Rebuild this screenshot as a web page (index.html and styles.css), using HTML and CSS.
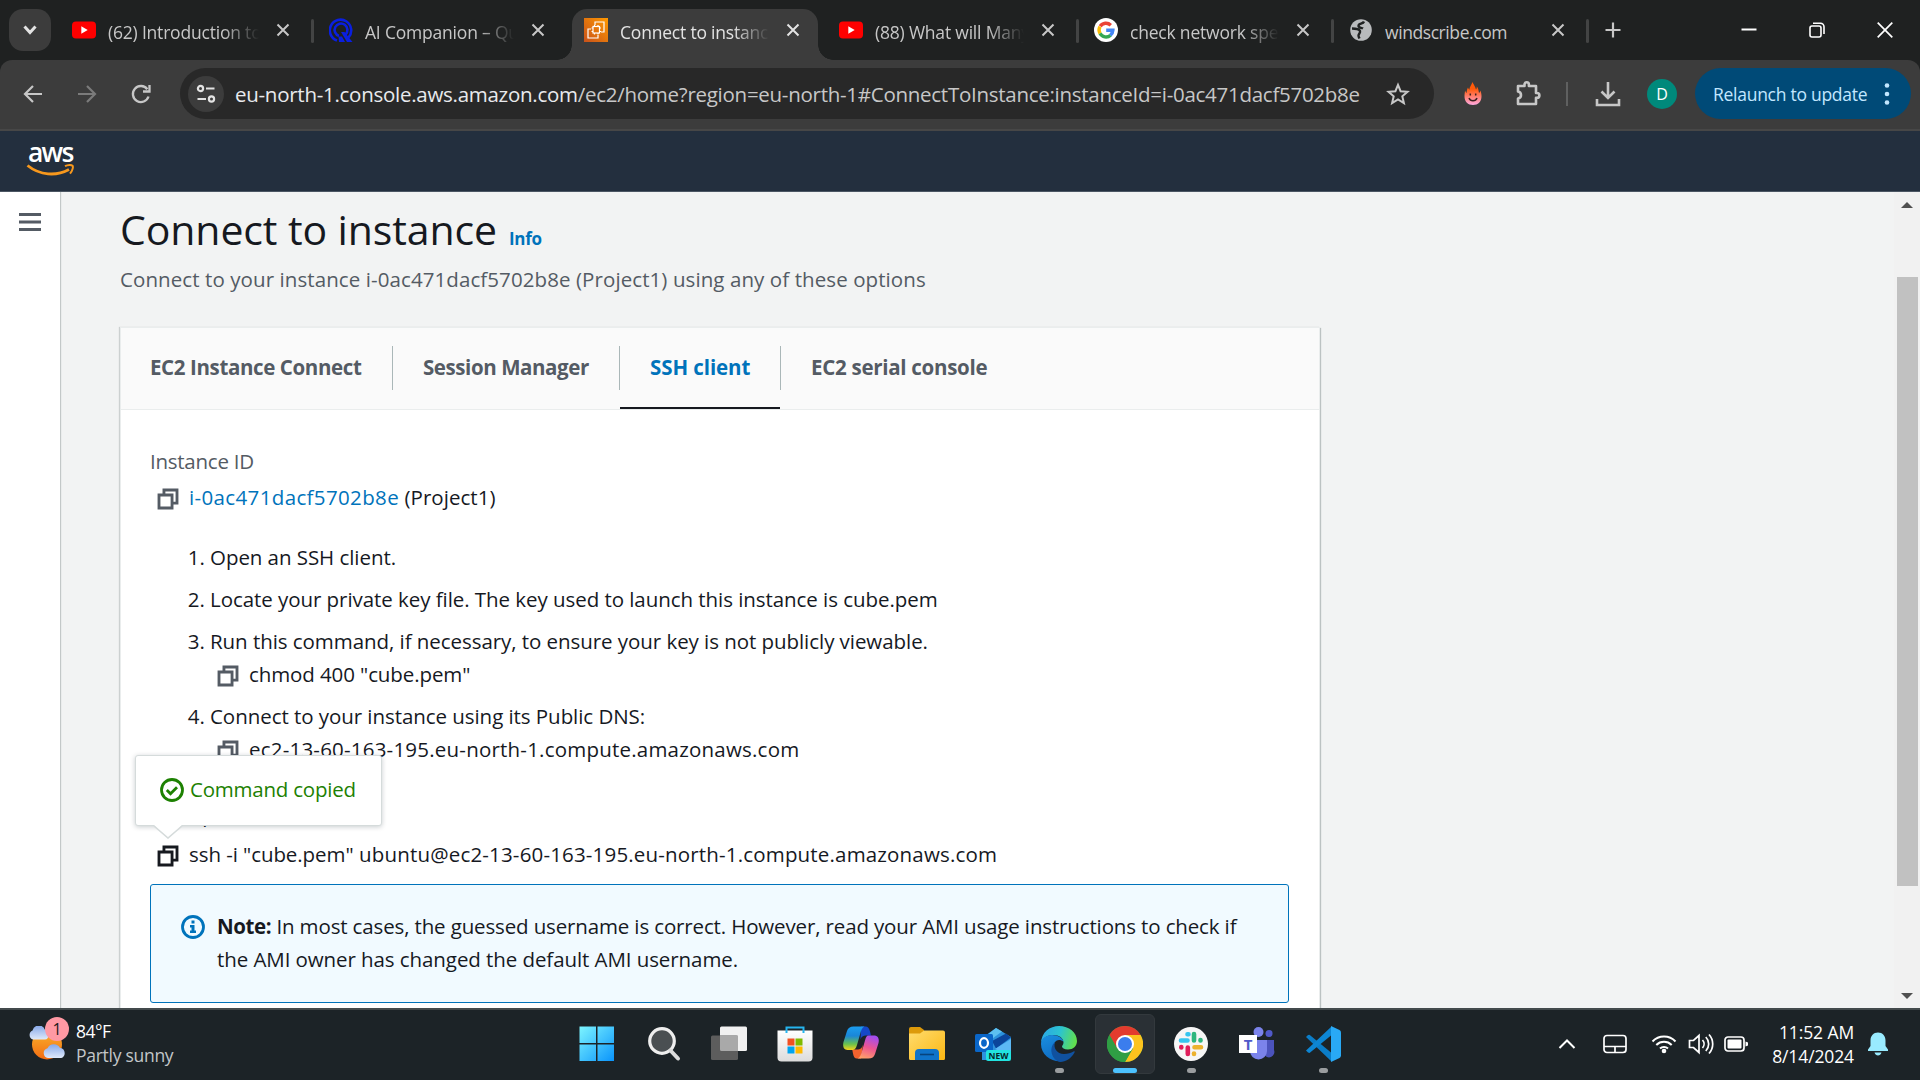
FILE: index.html
```html
<!DOCTYPE html>
<html lang="en">
<head>
<meta charset="utf-8">
<title>Connect to instance</title>
<link rel="stylesheet" href="styles.css">
</head>
<body>
<svg class="defs" width="0" height="0" aria-hidden="true">
  <defs>
    <symbol id="close" viewBox="0 0 14 14"><path d="M1.5 1.5l11 11M12.5 1.5l-11 11" stroke="currentColor" stroke-width="2" fill="none"/></symbol>
    <symbol id="youtube" viewBox="0 0 24 24"><rect x="0" y="3.5" width="24" height="17" rx="4" fill="#f00"/><path d="M9.3 8.2v7.6l6.4-3.8z" fill="#fff"/></symbol>
    <symbol id="copy" viewBox="0 0 16 16"><path d="M2 5.3h8.7V14H2zM5.3 5V2H14v8.7h-3" fill="none" stroke="currentColor" stroke-width="1.9"/></symbol>
    <linearGradient id="gWin" x1="0" y1="0" x2="1" y2="1"><stop offset="0" stop-color="#7df5ff"/><stop offset="1" stop-color="#0a94fb"/></linearGradient>
    <linearGradient id="gAws" x1="0" y1="1" x2="1" y2="0"><stop offset="0" stop-color="#c8511b"/><stop offset="1" stop-color="#f90"/></linearGradient>
    <linearGradient id="gFlame" x1="0" y1="0" x2="0" y2="1"><stop offset="0.3" stop-color="#ff5a0a"/><stop offset="1" stop-color="#ffa8e0"/></linearGradient>
    <linearGradient id="gFolder" x1="0" y1="0" x2="1" y2="1"><stop offset="0" stop-color="#ffdc6e"/><stop offset="1" stop-color="#fbb713"/></linearGradient>
    <linearGradient id="gBag" x1="0" y1="0" x2="0" y2="1"><stop offset="0" stop-color="#fff"/><stop offset="1" stop-color="#dcdcdc"/></linearGradient>
    <linearGradient id="gCop1" x1="0" y1="0" x2="0" y2="1"><stop offset="0" stop-color="#1b9df0"/><stop offset="0.4" stop-color="#1a86d8"/><stop offset="0.75" stop-color="#6bc14b"/><stop offset="1" stop-color="#f7d21c"/></linearGradient>
    <linearGradient id="gCop2" x1="0.6" y1="0" x2="0.3" y2="1"><stop offset="0" stop-color="#a34df0"/><stop offset="0.5" stop-color="#ee5591"/><stop offset="1" stop-color="#fda06a"/></linearGradient>
    <linearGradient id="gEdge1" x1="0" y1="0.3" x2="1" y2="0.5"><stop offset="0" stop-color="#2aa6e6"/><stop offset="0.5" stop-color="#2cc3d0"/><stop offset="1" stop-color="#62e04c"/></linearGradient>
    <linearGradient id="gEdge2" x1="0" y1="0" x2="0.4" y2="1"><stop offset="0" stop-color="#1a8fe0"/><stop offset="1" stop-color="#0f6cc4"/></linearGradient>
    <linearGradient id="gSun" x1="0" y1="0" x2="0" y2="1"><stop offset="0" stop-color="#f9b52c"/><stop offset="1" stop-color="#f36b12"/></linearGradient>
    <linearGradient id="gCloud" x1="0" y1="0" x2="0" y2="1"><stop offset="0" stop-color="#86a8e8"/><stop offset="1" stop-color="#dfe9fb"/></linearGradient>
  </defs>
</svg>

<header class="tabstrip">
  <button class="tab-search"><svg width="16" height="12" viewBox="0 0 16 12"><path d="M2.5 2.5L8 8.5l5.5-6" fill="none" stroke="#e3e3e3" stroke-width="3"/></svg></button>
  <div class="tab tab-first sep"><svg class="fav"><use href="#youtube"/></svg><span class="tab-title fade">(62) Introduction to</span><svg class="x"><use href="#close"/></svg></div>
  <div class="tab">
    <svg class="fav" viewBox="0 0 24 24"><g fill="none" stroke="#0a1fe0" stroke-width="2.6"><path d="M8 22.5A10.700 10.700 0 1 1 19.500 19.500"/><path d="M10 18A6.400 6.400 0 1 1 16.500 16.500"/></g><path d="M12 14h3.500l8 10h-5.500z" fill="#0a1fe0"/><path d="M9.500 18.500h3.500l3 5.500H10z" fill="#0a1fe0"/></svg>
    <span class="tab-title fade">AI Companion – Qu</span><svg class="x"><use href="#close"/></svg></div>
  <div class="tab active">
    <svg class="fav" viewBox="0 0 24 24"><path fill="url(#gAws)" d="M0 0h24v24H0z"/><g fill="none" stroke="#fff" stroke-width="1.2"><rect x="9" y="8.5" width="6.5" height="6.5"/><path d="M10.5 7v1.5M14 7v1.5M10.5 15v1.5M14 15v1.5M7.5 10H9M7.5 13.500H9M15.500 10H17M15.500 13.500H17M11 7V4h9v10h-3M7 11H4v9h10v-3"/></g></svg>
    <span class="tab-title fade">Connect to instance</span><svg class="x"><use href="#close"/></svg></div>
  <div class="tab sep"><svg class="fav"><use href="#youtube"/></svg><span class="tab-title fade">(88) What will Many</span><svg class="x"><use href="#close"/></svg></div>
  <div class="tab sep">
    <svg class="fav" viewBox="0 0 24 24"><circle cx="12" cy="12" r="12" fill="#fff"/><g fill="none" stroke-width="3.4"><path d="M6.2 8.300A6.900 6.900 0 0 1 16.800 7.200" stroke="#ea4335"/><path d="M6 15.400A6.900 6.900 0 0 1 6 8.600" stroke="#fbbc05"/><path d="M16.600 17.200A6.900 6.900 0 0 1 6 15.400" stroke="#34a853"/><path d="M12.200 12.200h6.700a6.900 6.900 0 0 1-2.500 5" stroke="#4285f4"/></g></svg>
    <span class="tab-title fade">check network spee</span><svg class="x"><use href="#close"/></svg></div>
  <div class="tab sep">
    <svg class="fav" viewBox="0 0 24 24"><circle cx="12" cy="12" r="10.800" fill="#b9bbbd"/><path d="M15 3.500c-1 3-5.500 1.500-5.500 4.500 0 2 3 1.500 4.500 2.500M3 10.500c3 0 7 0 8 2.500.7 2-1.500 2.500-1.500 4.500 0 1.200.5 2 1 3" fill="none" stroke="#1f2121" stroke-width="2.400"/></svg>
    <span class="tab-title tight">windscribe.com</span><svg class="x"><use href="#close"/></svg></div>
  <button class="new-tab"><svg width="16" height="16" viewBox="0 0 16 16"><path d="M8 .5v15M.5 8h15" stroke="#c7c7c7" stroke-width="2.200"/></svg></button>
  <div class="window-controls">
    <svg width="16" height="16" viewBox="0 0 16 16"><path d="M.5 7.500h15" stroke="#fff" stroke-width="2"/></svg>
    <svg width="16" height="16" viewBox="0 0 16 16"><g fill="none" stroke="#fff" stroke-width="1.600"><rect x="1" y="4" width="11" height="11" rx="2"/><path d="M4 1.200h7.500a3.500 3.500 0 0 1 3.500 3.500V12"/></g></svg>
    <svg width="16" height="16" viewBox="0 0 16 16"><path d="M.7.700l14.600 14.600M15.300.700L.7 15.300" stroke="#fff" stroke-width="1.700"/></svg>
  </div>
</header>

<div class="toolbar-back">
<nav class="toolbar">
  <div class="nav-buttons">
    <svg width="24" height="24" viewBox="0 0 24 24"><path d="M21 12H4.500M12 4l-8 8 8 8" fill="none" stroke="#c7c7c7" stroke-width="2.200"/></svg>
    <svg width="24" height="24" viewBox="0 0 24 24"><path d="M3 12h16.500M12 4l8 8-8 8" fill="none" stroke="#7b7b7b" stroke-width="2.200"/></svg>
    <svg width="24" height="24" viewBox="0 0 24 24"><path d="M19.500 14.500A8 8 0 1 1 18.300 7.200M20.500 3v6.500H14" fill="none" stroke="#c7c7c7" stroke-width="2.300"/></svg>
  </div>
  <div class="omnibox">
    <span class="site-info"><svg width="20" height="20" viewBox="0 0 20 20"><g fill="none" stroke="#e3e3e3" stroke-width="2.200"><circle cx="4.500" cy="4.500" r="2.600"/><path d="M10 4.500h8.500M1.500 15H10"/><circle cx="15.500" cy="15" r="2.600"/></g></svg></span>
    <span class="url"><b>eu-north-1.console.aws.amazon.com</b>/ec2/home?region=eu-north-1#ConnectToInstance:instanceId=i-0ac471dacf5702b8e</span>
    <svg class="star" width="24" height="24" viewBox="0 0 24 24"><path d="M12 2.800l2.600 6.400 6.900.6-5.200 4.500 1.600 6.800-5.900-3.600-5.900 3.600 1.600-6.800-5.200-4.500 6.900-.6z" fill="none" stroke="#c7c7c7" stroke-width="2"/></svg>
  </div>
  <div class="ext">
    <svg width="18" height="23" viewBox="0 0 18 23"><path d="M8.500 0c.5 2 2.800 4 3.500 7.500.6-.8.800-1.500.8-3C14.500 6.500 14.600 9 15 11c.8-.5 1.200-1.500 1.500-2.500.8 2.500 1 4 1 6C17.500 19.500 14 23 9 23S.5 19.500.5 14.500c0-2 .2-3.500.6-6 .4 1 .8 2 1.500 2.500C2.800 9 3 7 4 5.500c.3 1 .7 1.800 1.300 2.300C5.500 5 7.500 3 8.500 0z" fill="url(#gFlame)"/><path d="M5 16a4.300 4.300 0 0 0 8 0M6.300 11.500v2M11.700 11.500v2" fill="none" stroke="#3a2020" stroke-width="1.500"/></svg>
    <svg width="27" height="27" viewBox="0 0 27 27"><path d="M3 6h6.500V4.500a2.200 2.200 0 0 1 4.400 0V6H21v7h1a2.400 2.400 0 0 1 0 4.800h-1V24H3v-5.500c4-.5 4-6.500 0-7z" fill="none" stroke="#c7c7c7" stroke-width="2.600" stroke-linejoin="round"/></svg>
    <i class="bar"></i>
    <svg width="26" height="26" viewBox="0 0 26 26"><path d="M13 1v15M6.500 10.500l6.500 6.500 6.500-6.500M2 18v6h22v-6" fill="none" stroke="#c7c7c7" stroke-width="2.600"/></svg>
    <span class="avatar">D</span>
  </div>
  <button class="relaunch"><span>Relaunch to update</span><svg width="6" height="22" viewBox="0 0 6 22"><g fill="#c2e7ff"><circle cx="3" cy="2.500" r="2.300"/><circle cx="3" cy="11" r="2.300"/><circle cx="3" cy="19.500" r="2.300"/></g></svg></button>
</nav>
</div>

<div class="aws-header">
  <div class="aws-logo">
    <span>aws</span>
    <svg width="50" height="13" viewBox="0 0 50 13"><path d="M1.500 1.500C14 11.500 30 12.500 43 5.500" fill="none" stroke="#f7981d" stroke-width="2.800"/><path d="M39 2.200c3-1.500 6.500-1.500 7.500-.5s0 5-2.500 8" fill="none" stroke="#f7981d" stroke-width="2"/></svg>
  </div>
</div>

<div class="page">
  <aside class="side"><svg width="22" height="20" viewBox="0 0 22 20"><path d="M0 2.500h22M0 10h22M0 17.500h22" stroke="#545b64" stroke-width="3"/></svg></aside>
  <main class="main">
    <div class="heading"><h1>Connect to instance</h1><a class="info">Info</a></div>
    <p class="subtitle">Connect to your instance i-0ac471dacf5702b8e (Project1) using any of these options</p>
    <section class="card">
      <div class="card-tabs">
        <div class="ct t1"><span>EC2 Instance Connect</span></div>
        <div class="ct t2"><span>Session Manager</span></div>
        <div class="ct t3 selected"><span>SSH client</span></div>
        <div class="ct t4"><span>EC2 serial console</span></div>
      </div>
      <div class="card-body">
        <div class="label">Instance ID</div>
        <div class="copy-row id-row"><svg class="cp"><use href="#copy"/></svg><span><a>i-0ac471dacf5702b8e</a> (Project1)</span></div>
        <ol class="steps">
          <li>Open an SSH client.</li>
          <li>Locate your private key file. The key used to launch this instance is cube.pem</li>
          <li>Run this command, if necessary, to ensure your key is not publicly viewable.
            <div class="copy-row"><svg class="cp"><use href="#copy"/></svg><span class="cmd">chmod 400 "cube.pem"</span></div></li>
          <li>Connect to your instance using its Public DNS:
            <div class="copy-row"><svg class="cp"><use href="#copy"/></svg><span class="dns">ec2-13-60-163-195.eu-north-1.compute.amazonaws.com</span></div></li>
        </ol>
        <div class="example">Example:</div>
        <div class="copy-row ssh-row"><svg class="cp"><use href="#copy"/></svg><span><span class="ssh-cmd">ssh -i "cube.pem"</span> ubuntu@ec2-13-60-163-195.eu-north-1.compute.amazonaws.com</span>
          <div class="popover">
            <svg width="24" height="24" viewBox="0 0 24 24"><circle cx="12" cy="12" r="10.500" fill="none" stroke="#1d8102" stroke-width="2.800"/><path d="M6.800 12l3.700 3.700 6.500-6.500" fill="none" stroke="#1d8102" stroke-width="2.800"/></svg>
            <span>Command copied</span>
            <svg class="tip" width="32" height="14" viewBox="0 0 32 14"><path d="M2 0h28L16 12.500z" fill="#fff"/><path d="M2 1l14 12L30 1" fill="none" stroke="#d5dbdb" stroke-width="1.600"/></svg>
          </div>
        </div>
        <div class="alert">
          <svg width="24" height="24" viewBox="0 0 24 24"><circle cx="12" cy="12" r="10.500" fill="none" stroke="#0073bb" stroke-width="2.800"/><path d="M10.500 5.500h3v3h-3zM9 10h4.500v5.500H15V18H9v-2.500h1.500v-3H9z" fill="#0073bb"/></svg>
          <p><strong>Note:</strong> In most cases, the guessed username is correct. However, read your AMI usage instructions to check if<br><span class="l2">the AMI owner has changed the default AMI username.</span></p>
        </div>
      </div>
    </section>
  </main>
  <div class="scrollbar">
    <svg width="14" height="6" viewBox="0 0 14 6"><path d="M1 6l6-6 6 6z" fill="#505050"/></svg>
    <i class="thumb"></i>
    <svg width="14" height="6" viewBox="0 0 14 6"><path d="M1 0l6 6 6-6z" fill="#505050"/></svg>
  </div>
</div>

<footer class="taskbar">
  <div class="weather">
    <div class="weather-icon">
      <svg width="38" height="36" viewBox="0 0 38 36"><circle cx="19" cy="18.500" r="15" fill="url(#gSun)"/><path d="M5 13.500a4.800 4.800 0 0 1-.5-9 6.500 6.500 0 0 1 12.500-.5c4 0 5 9.500 0 9.500z" fill="url(#gCloud)"/><path d="M20 32a5 5 0 0 1-.5-9.800A7 7 0 0 1 32 22c6 0 6.500 10 0 10z" fill="url(#gCloud)"/></svg>
      <span class="badge">1</span>
    </div>
    <div class="weather-text"><div class="temp">84°F</div><div class="cond">Partly sunny</div></div>
  </div>
  <div class="apps">
    <div class="app"><svg viewBox="0 0 36 36"><path d="M.5.500h16.500v16.500H.5zM18.500.500H35v16.500H18.500zM.5 18.500h16.500V35H.5zM18.500 18.500H35V35H18.500z" fill="url(#gWin)"/></svg></div>
    <div class="app"><svg viewBox="0 0 36 36"><circle cx="17" cy="15" r="12.300" fill="#4a4f52" stroke="#eee" stroke-width="3.200"/><path d="M25.500 24.500l7.500 8" stroke="#dcdcdc" stroke-width="4" stroke-linecap="round"/></svg></div>
    <div class="app"><svg viewBox="0 0 36 36"><rect x="9" y="0.500" width="27" height="24.500" rx="1.500" fill="#f1f1f1"/><rect x="0" y="9.500" width="27" height="24.500" rx="1.500" fill="#5d5d5d"/><path d="M9 9.500h18V25H10.500A1.500 1.500 0 0 1 9 23.500z" fill="#a9a9a9"/></svg></div>
    <div class="app"><svg viewBox="0 0 36 36"><path d="M.5 4.500h35v27a4 4 0 0 1-4 4h-27a4 4 0 0 1-4-4z" fill="url(#gBag)"/><path d="M9.500 7V1.500h17V7" fill="none" stroke="#25b4ee" stroke-width="2"/><path d="M10.500 12.500h7v7h-7z" fill="#f25022"/><path d="M18.500 12.500h7v7h-7z" fill="#7fba00"/><path d="M10.500 20.500h7v7h-7z" fill="#00a4ef"/><path d="M18.500 20.500h7v7h-7z" fill="#ffb900"/></svg></div>
    <div class="app"><svg viewBox="0 0 36 36"><path d="M18 .5h4.500c2.500 0 3.500 1.500 4.500 5l1 4h-5c-3 0-4.500 1-5.500 4z" fill="#1548c8"/><path d="M18 32.500h-4c-2.500 0-3.500-2-4-5l-.8-4H14c3 0 5-1 6-5z" fill="#f2622e"/><path d="M10.500.500h11c-2.500 1-3.500 4-4.500 8l-3 10.500c-1.200 4-2.500 5-5 5H4.500C.5 24-.5 20 .5 16L4 5C5 2 7 .5 10.500.500z" fill="url(#gCop1)"/><path d="M25.500 9.500h5c4.500 0 6 3 5 7.500L32 28c-1 3-3 4.500-6.500 4.500H14.500c2.500-1 3.500-4 4.500-7.500l3-10.500c.8-3 1.500-5 3.500-5z" fill="url(#gCop2)"/></svg></div>
    <div class="app"><svg viewBox="0 0 36 36"><path d="M0 3a2 2 0 0 1 2-2h9l4 3v6H0z" fill="#dd9a0a"/><path d="M0 7.500h11l4-3h19a2 2 0 0 1 2 2v26a1.500 1.500 0 0 1-1.500 1.500h-33A1.500 1.500 0 0 1 0 32.500z" fill="url(#gFolder)"/><path d="M6 34v-7a4 4 0 0 1 4-4h16a4 4 0 0 1 4 4v7z" fill="#0f73c9"/><path d="M11 28.500h14" stroke="#07437c" stroke-width="1.600"/></svg></div>
    <div class="app"><svg viewBox="0 0 36 36"><path d="M7 12L21 2l15 9v19a4 4 0 0 1-4 4H7z" fill="#2d93dc"/><path d="M12 9l9-7 6 3.500L14 15z" fill="#5cc0f0"/><path d="M17 15L31 7.500l5 4-15 11z" fill="#0b459b"/><path d="M20 23l16-10v17z" fill="#5cb8f5"/><rect x="0" y="8" width="18" height="18" rx="1.500" fill="#0a66c8"/><ellipse cx="9" cy="17" rx="4" ry="4.800" fill="none" stroke="#fff" stroke-width="2.200"/><rect x="11" y="24" width="25" height="11" rx="2" fill="#22e3e0"/><text x="23.500" y="32.600" class="new-label">NEW</text></svg></div>
    <div class="app running"><svg viewBox="0 0 36 36"><path d="M0 18C0 6 9 0 18 0c10 0 18 6.500 18 15 0 5-4 8.500-9 8.500-4 0-6-1.500-6-3 0-1 1.500-1.500 1.500-4C22.500 12 18 9 12.500 9 5 9 0 14 0 18z" fill="url(#gEdge1)"/><path d="M0 18c0-5.500 5-9 11-9 6 0 11 3 11.500 7-1-1.500-3-2-4.500-2-4 0-6.500 5-5 10 1.500 5.500 6 9 11 10.500C13 38 0 30 0 18z" fill="url(#gEdge2)"/><path d="M14 16c-2 6 2 12 9 12 4 0 7-1 9.500-2.500 1-.5 1.500.3 1 1C30 32.500 25 36 19 36 11 34 7 22 14 16z" fill="#10519f"/></svg></div>
    <div class="app focused"><svg viewBox="0 0 36 36"><circle cx="18" cy="18" r="18" fill="#34a046"/><path d="M18 9h15.600A18 18 0 0 1 18 36l7.800-13.500z" fill="#fcc31e"/><path d="M2.400 9A18 18 0 0 1 33.600 9H18l-7.800 13.500z" fill="#e33b2e"/><path d="M2.400 9a18 18 0 0 0 15.600 27l7.800-13.500H10.200z" fill="#2f9e44"/><circle cx="18" cy="18" r="9" fill="#fff"/><circle cx="18" cy="18" r="7" fill="#3b7ded"/></svg></div>
    <div class="app running"><svg viewBox="0 0 36 36"><circle cx="18" cy="18" r="17" fill="#f6f6f6"/><g stroke-width="4.600" stroke-linecap="round"><path d="M8 14.500h6.500M15.500 8.200h-1" stroke="#36c5f0"/><path d="M21 8v6.500M27.500 14.500v-.5" stroke="#2eb67d"/><path d="M21.500 21.300H28M21 27.500v.5" stroke="#ecb22e"/><path d="M14.800 21.500V28M8.300 21v.5" stroke="#e01e5a"/></g></svg></div>
    <div class="app"><svg viewBox="0 0 36 36"><circle cx="30" cy="7.500" r="3.500" fill="#5059c9"/><path d="M25 14h10v10a5 5 0 0 1-10 4z" fill="#4b53bc"/><circle cx="19.500" cy="6" r="5" fill="#7b83eb"/><path d="M11 14h17v11a8.500 8.500 0 0 1-17 0z" fill="#7b83eb"/><rect x="0" y="9" width="18" height="18" fill="#fff"/><text x="9" y="23.500" class="teams-label">T</text></svg></div>
    <div class="app running"><svg viewBox="0 0 36 36"><path d="M1 11l2-2 1.500-.2L26 26.500V35z" fill="#0b7dc8"/><path d="M1 24.500l2 2 1.500.5L26 9.500V1z" fill="#0d86d4"/><path d="M26 0l8.500 4A3 3 0 0 1 36 6.500v23a3 3 0 0 1-1.500 2.500L26 36z" fill="#29a9f5"/></svg></div>
  </div>
  <div class="tray">
    <svg width="18" height="12" viewBox="0 0 18 12"><path d="M1.500 10L9 2.500l7.500 7.500" fill="none" stroke="#fff" stroke-width="2"/></svg>
    <svg width="24" height="20" viewBox="0 0 24 20"><g fill="none" stroke="#fff" stroke-width="1.700"><rect x="1" y="1.500" width="22" height="17" rx="3"/><path d="M1 12.500h22M12 12.500v6"/></g></svg>
    <svg width="26" height="20" viewBox="0 0 26 20"><g fill="none" stroke="#fff" stroke-width="2"><path d="M1.500 7.500a16 16 0 0 1 23 0M5.300 11a11 11 0 0 1 15.400 0M9 14.500a5.800 5.800 0 0 1 8 0"/></g><circle cx="13" cy="17" r="2.300" fill="#fff"/></svg>
    <svg width="26" height="22" viewBox="0 0 26 22"><g fill="none" stroke="#fff" stroke-width="1.700"><path d="M1.500 7.500h4L11 2.500v17l-5.500-5h-4zM14.500 7a6 6 0 0 1 0 8M17.800 4a10 10 0 0 1 0 14M21 1.500a14 14 0 0 1 0 19"/></g></svg>
    <svg width="24" height="16" viewBox="0 0 24 16"><rect x="1" y="1" width="19" height="14" rx="3" fill="none" stroke="#fff" stroke-width="1.700"/><rect x="3.500" y="3.500" width="14" height="9" rx="1" fill="#fff"/><path d="M21.500 5.500l2.500 1v3l-2.500 1z" fill="#fff"/></svg>
    <div class="clock"><div>11:52 AM</div><div>8/14/2024</div></div>
    <svg width="20" height="24" viewBox="0 0 20 24"><path d="M10 0.500c-4.500 0-7.500 3.500-7.500 8V14L0 17.500V19h20v-1.500L17.500 14V8.500c0-4.500-3-8-7.500-8zM6.500 20.500h7c-.5 2-2 3-3.500 3s-3-1-3.500-3z" fill="#99ebff"/></svg>
  </div>
</footer>
</body>
</html>
```
FILE: styles.css
```css
* { box-sizing: border-box; }
body {
  margin: 0; width: 1920px; height: 1080px; overflow: hidden;
  display: flex; flex-direction: column;
  font-family: "Open Sans", "Noto Sans", sans-serif; font-size: 20.5px;
  color: #16191f; background: #1c2327;
}
button { border: 0; padding: 0; margin: 0; font: inherit; background: none; }
h1, p, ol { margin: 0; }
svg { display: block; flex: none; }
.defs { position: absolute; }

/* tab strip */
.tabstrip { height: 60px; flex: none; display: flex; padding: 9px 27px 0 9px; background: #1f2121; font-size: 17.5px; letter-spacing: -0.2px; color: #c7c7c7; }
.tab-search { width: 42px; height: 42px; border-radius: 14px; background: #3c3c3c; display: flex; align-items: center; justify-content: center; margin-right: 8px; }
.tab { width: 255px; height: 51px; padding: 0 0 9px 15px; display: flex; align-items: center; position: relative; }
.tab-first { padding-left: 13px; }
.fav { width: 24px; height: 24px; margin-right: 12px; }
.tab-title { width: 149px; height: 24px; line-height: 24px; margin-top: 3px; overflow: hidden; white-space: nowrap; }
.tab-first .tab-title { width: 151px; }
.tab-title.fade { -webkit-mask-image: linear-gradient(90deg, #000 76%, transparent 100%); mask-image: linear-gradient(90deg, #000 76%, transparent 100%); }
.tab-title.tight { letter-spacing: -0.42px; }
.x { width: 14px; height: 14px; margin-left: 17px; color: #c7c7c7; }
.sep::after { content: ""; position: absolute; right: 0; top: 10px; width: 3px; height: 24px; border-radius: 2px; background: #434444; }
.active { color: #e3e3e3; }
.active .x { color: #e3e3e3; }
.active > * { z-index: 1; }
.active::before { content: ""; position: absolute; left: 3px; right: 6px; top: 0; bottom: 0; background: #3c3c3c; border-radius: 15px 15px 0 0; }
.active::after { content: ""; position: absolute; left: -12px; right: -9px; bottom: 0; height: 15px;
  background: radial-gradient(circle 15px at 0 0, transparent 14.5px, #3c3c3c 15px) left / 15px 15px no-repeat, radial-gradient(circle 15px at 15px 0, transparent 14.5px, #3c3c3c 15px) right / 15px 15px no-repeat; }
.new-tab { margin-left: 16px; height: 42px; }
.window-controls { margin-left: auto; display: flex; gap: 52px; padding-top: 13px; height: 42px; }

/* toolbar */
.toolbar-back { background: #1f2121; flex: none; }
.toolbar { height: 71px; display: flex; align-items: center; padding: 7px 9px 9px 21px; background: #3c3c3c; border-bottom: 2px solid #474747; border-radius: 12px 12px 0 0; }
.nav-buttons { display: flex; gap: 30px; width: 159px; }
.omnibox { width: 1254px; height: 51px; border-radius: 26px; background: #282828; display: flex; align-items: center; padding: 0 24px 0 8px; }
.site-info { width: 36px; height: 36px; border-radius: 50%; background: #3c3c3c; display: flex; align-items: center; justify-content: center; margin-right: 11px; }
.url { color: #c7c7c7; letter-spacing: -0.27px; white-space: nowrap; line-height: 30px; }
.url b { font-weight: 400; color: #e8eaed; }
.star { margin-left: auto; }
.ext { display: flex; align-items: center; width: 261px; padding-left: 30px; }
.ext svg:nth-of-type(2) { margin-left: 33px; }
.bar { width: 2px; height: 24px; background: #5f6060; margin-left: 24px; }
.ext svg:nth-of-type(3) { margin-left: 27px; }
.avatar { width: 30px; height: 30px; border-radius: 50%; background: #00897b; color: #fff; font-size: 16px; display: flex; align-items: center; justify-content: center; margin-left: 26px; }
.relaunch { width: 216px; height: 51px; border-radius: 26px; background: #004a77; color: #c2e7ff; font-size: 17.5px; letter-spacing: -0.27px; display: flex; align-items: center; justify-content: space-between; padding: 0 21px 0 18px; }

/* service header */
.aws-header { height: 61px; flex: none; background: #232f3e; border-bottom: 1px solid #4b5663; padding: 9px 0 0 26px; }
.aws-logo { width: 50px; }
.aws-logo span { display: block; height: 24px; line-height: 24px; padding-left: 2px; font-size: 26.5px; font-weight: 600; letter-spacing: -1.8px; color: #fff; }

/* page */
.page { flex: 1; min-height: 0; display: flex; background: #f2f3f3; overflow: hidden; }
.side { width: 60px; background: #fff; box-shadow: 1px 0 1px #c3c8c8; padding: 20px 0 0 19px; }
.main { flex: 1; padding: 12px 0 0 60px; }
.heading { display: flex; align-items: baseline; height: 50px; line-height: 50px; }
h1 { font-size: 41px; font-weight: 400; letter-spacing: -0.1px; }
.info { color: #0073bb; font-size: 17px; font-weight: 700; letter-spacing: -0.3px; margin-left: 12px; }
.subtitle { margin-top: 9px; line-height: 33px; color: #545b64; letter-spacing: 0.085px; }
.card { width: 1200px; height: 720px; margin-top: 31px; background: #fff; border: 1px solid #eaeded; box-shadow: 1px 1px 1px #bcc2c2, -1px 0 1px #ccd0d0; }
.card-tabs { display: flex; height: 82px; background: #fafafa; border-bottom: 1px solid #eaeded; font-weight: 700; color: #545b64; padding-top: 18px; }
.ct { position: relative; height: 44px; padding: 5px 0 0 30px; border-right: 1px solid #aab7b8; line-height: 33px; white-space: nowrap; }
.t1 { width: 272px; padding-left: 29px; letter-spacing: -0.38px; }
.t2 { width: 227px; letter-spacing: -0.42px; }
.t3 { width: 161px; letter-spacing: -0.08px; }
.t4 { border: 0; letter-spacing: -0.28px; }
.selected { color: #0073bb; }
.selected::after { content: ""; position: absolute; left: 0; right: 0; bottom: -19px; height: 2px; background: #16191f; }
.card-body { padding: 35px 30px 0 29px; line-height: 33px; letter-spacing: -0.055px; white-space: nowrap; }
.label { color: #545b64; letter-spacing: -0.25px; }
.copy-row { display: flex; gap: 9px; padding-left: 6px; height: 33px; position: relative; }
.cp { width: 24px; height: 24px; color: #545b64; margin-top: 6px; }
.id-row { margin-top: 3px; letter-spacing: 0.05px; }
.id-row a { letter-spacing: 0.36px; color: #0073bb; }
.steps { margin-top: 27px; padding-left: 60px; }
.steps li + li { margin-top: 9px; }
.steps .copy-row { padding-left: 6px; }
.cmd { letter-spacing: -0.1px; }
.dns { letter-spacing: 0.21px; }
.example { margin-top: 32px; }
.ssh-row { margin-top: 7px; letter-spacing: 0.17px; }
.ssh-cmd { letter-spacing: -0.07px; }
.ssh-row .cp { color: #16191f; }
.popover { position: absolute; left: -15px; bottom: 45px; width: 247px; height: 71px; background: #fff; border: 1px solid #d5dbdb; border-radius: 3px; box-shadow: 0 1px 5px rgba(0, 28, 36, 0.22); display: flex; align-items: center; gap: 6px; padding: 0 0 2px 24px; color: #1d8102; letter-spacing: -0.22px; }
.tip { position: absolute; left: 16px; top: 69px; }
.alert { margin-top: 13px; height: 119px; border: 1px solid #0073bb; border-radius: 3px; background: #f1faff; padding: 25px 0 0 30px; display: flex; gap: 12px; letter-spacing: -0.142px; }
.alert svg { margin-top: 5px; }
.alert strong { letter-spacing: -0.4px; }
.l2 { letter-spacing: -0.079px; }
.scrollbar { width: 26px; background: #f1f1f1; display: flex; flex-direction: column; align-items: center; padding: 10px 0 9px; }
.thumb { width: 21px; height: 609px; margin: 69px 0 auto; background: #c1c1c1; }

/* taskbar */
.taskbar { height: 72px; flex: none; background: #1c2327; border-top: 2px solid #434a4c; display: flex; position: relative; color: #fff; font-size: 17.5px; line-height: 24px; }
.weather { display: flex; width: 564px; padding: 9px 0 0 28px; }
.weather-icon { position: relative; width: 48px; padding-top: 7px; }
.badge { position: absolute; left: 17px; top: -2px; width: 24px; height: 24px; border-radius: 50%; background: #ff99a4; color: #1b1b1b; text-align: center; font-size: 16px; }
.temp { letter-spacing: -0.5px; }
.cond { color: #c3c7c9; letter-spacing: -0.28px; }
.apps { display: flex; }
.app { width: 66px; height: 70px; display: flex; flex-direction: column; align-items: center; padding-top: 16px; }
.app svg { width: 36px; height: 36px; }
.running::after { content: ""; width: 9px; height: 5px; border-radius: 3px; background: #9a9d9f; margin-top: 6px; }
.focused { width: 60px; height: 60px; margin: 4px 3px 0; padding-top: 12px; border-radius: 6px; background: #2a3035; border: 1px solid #33393d; }
.focused svg { margin-top: -1px; }
.focused::after { content: ""; width: 24px; height: 5px; border-radius: 3px; background: #4cc2ff; margin-top: 6px; }
.new-label { font: 700 8.5px "Open Sans", sans-serif; letter-spacing: 0; text-anchor: middle; fill: #06282b; }
.teams-label { font: 700 15px "Open Sans", sans-serif; text-anchor: middle; fill: #5059c9; }
.tray { margin-left: auto; display: flex; align-items: center; padding: 0 32px 2px 0; }
.tray svg:nth-of-type(2) { margin-left: 27px; }
.tray svg:nth-of-type(3) { margin-left: 24px; }
.tray svg:nth-of-type(4) { margin-left: 11px; }
.tray svg:nth-of-type(5) { margin-left: 10px; }
.clock { margin: -1px 0 0 23px; width: 83px; text-align: right; letter-spacing: -0.12px; white-space: nowrap; }
.tray svg:nth-of-type(6) { margin-left: 14px; }
```
